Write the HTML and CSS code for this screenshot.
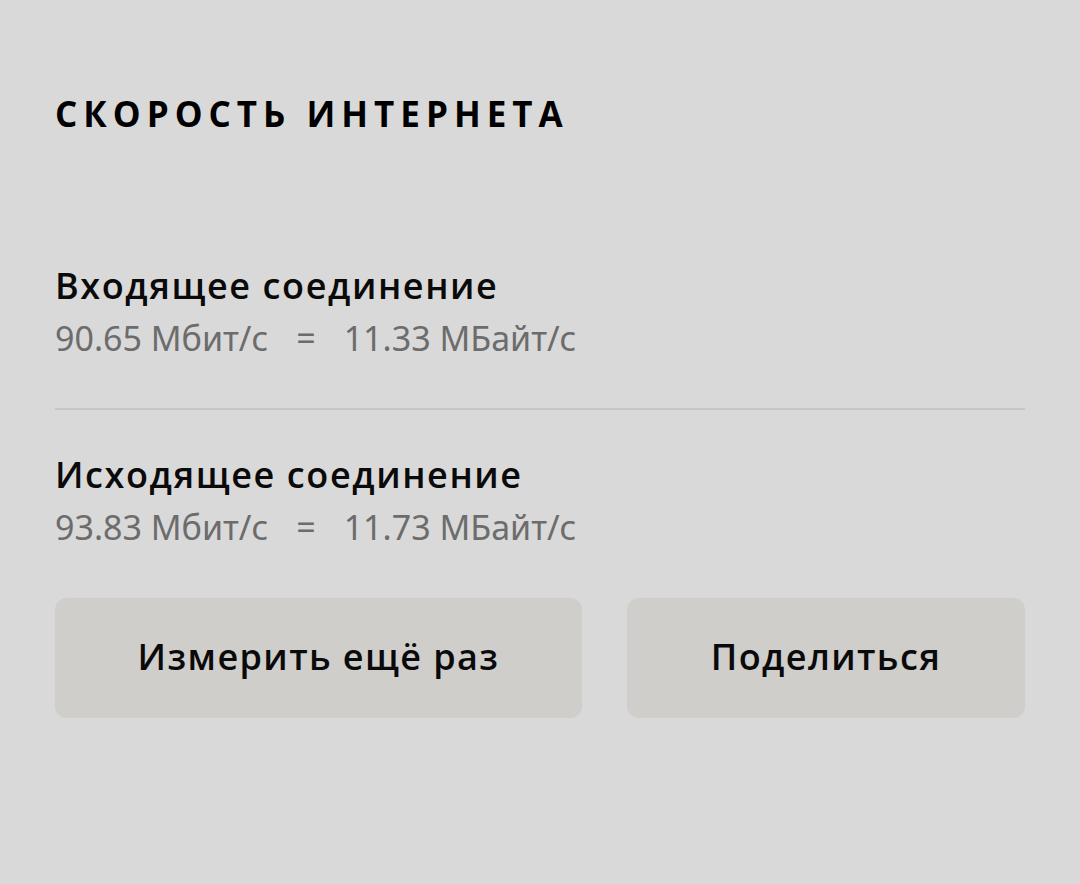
FILE: index.html
```html
<!DOCTYPE html>
<html lang="ru">
<head>
  <meta charset="UTF-8" />
  <meta name="viewport" content="width=device-width, initial-scale=1.0" />
  <title>Скорость интернета</title>
  <link rel="stylesheet" href="styles.css">
</head>
<body>
  <div class="page">
    <h1 class="title">Скорость интернета</h1>

    <div class="speed">
      <div class="speed-name">Входящее соединение</div>
      <div class="speed-value">
        <span>90.65 Мбит/с</span>
        <span>=</span>
        <span>11.33 МБайт/с</span>
      </div>
    </div>

    <div class="divider"></div>

    <div class="speed">
      <div class="speed-name">Исходящее соединение</div>
      <div class="speed-value">
        <span>93.83 Мбит/с</span>
        <span>=</span>
        <span>11.73 МБайт/с</span>
      </div>
    </div>

    <div class="actions">
      <button class="btn btn-wide">Измерить ещё раз</button>
      <button class="btn">Поделиться</button>
    </div>
  </div>
</body>
</html>
```

FILE: styles.css
```css
body {
  margin: 0;
  background-color: #d9d9d9;
  font-family: "Noto Sans", Roboto, sans-serif;
  color: #0a0a0a;
}

.page {
  padding: 94px 55px 0;
}

.title {
  margin: 0 0 130px;
  font-family: "Open Sans", sans-serif;
  font-size: 35px;
  line-height: 40px;
  font-weight: 700;
  letter-spacing: 6px;
  text-transform: uppercase;
  color: #000;
}

.speed-name {
  font-family: "Open Sans", sans-serif;
  font-size: 36px;
  line-height: 44px;
  font-weight: 600;
  letter-spacing: 1.6px;
}

.speed-value {
  display: flex;
  gap: 28px;
  margin-top: 10px;
  font-size: 34px;
  line-height: 40px;
  color: #6c6c6c;
}

.divider {
  height: 2px;
  background: #c6c6c6;
  margin: 50px 0 43px;
}

.actions {
  display: flex;
  gap: 45px;
  margin-top: 51px;
}

.btn {
  height: 120px;
  width: 398px;
  padding: 0 0 4px;
  border: none;
  border-radius: 12px;
  background-color: #cfceca;
  font-family: "Open Sans", sans-serif;
  font-size: 36px;
  font-weight: 600;
  letter-spacing: 1.4px;
  color: #0a0a0a;
  cursor: pointer;
}

.btn-wide {
  width: 527px;
}
```
